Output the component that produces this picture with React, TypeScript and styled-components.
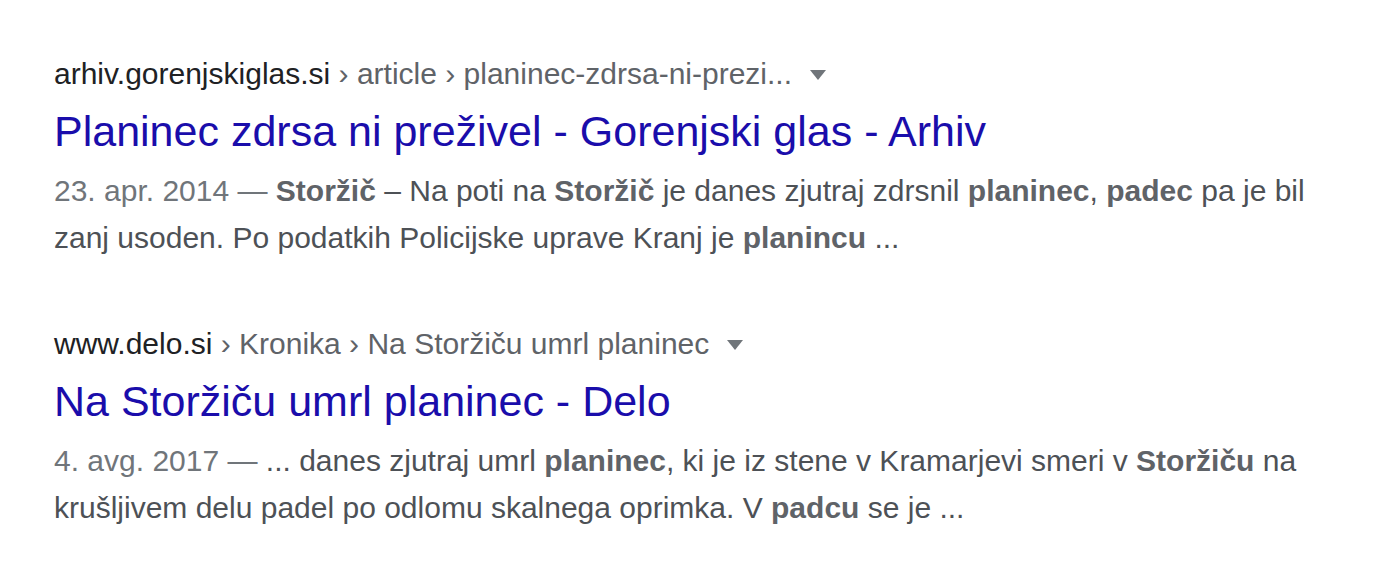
import React from "react";
import styled, { createGlobalStyle } from "styled-components";

// google results page, shown at ~2.125x zoom
const GlobalStyle = createGlobalStyle`
  html, body { margin: 0; padding: 0; background: #fff; }
  body { font-family: "Liberation Sans", Arial, sans-serif; }
`;

const Page = styled.div`
  padding: 54px 0 0 54px;
  width: 1275px;
`;

const Result = styled.div`
  margin-bottom: 63px;
`;

const Crumbs = styled.div`
  font-size: 30px;
  line-height: 39px;
  color: #5f6368;
  white-space: nowrap;
`;

const Domain = styled.span`
  color: #202124;
`;

const Arrow = styled.span`
  display: inline-block;
  vertical-align: middle;
  margin-left: 18px;
  margin-top: -2px;
  border-left: 8px solid transparent;
  border-right: 8px solid transparent;
  border-top: 10px solid #70757a;
`;

const Title = styled.h3`
  margin: 0 0 8px;
  padding-top: 11px;
  font-size: 43px;
  line-height: 55px;
  font-weight: normal;
  color: #1a0dab;
`;

const Snippet = styled.div`
  font-size: 30px;
  line-height: 47px;
  color: #4d5156;
  b {
    color: #5f6368;
    font-weight: bold;
  }
`;

const Date = styled.span`
  color: #70757a;
`;

type Item = {
  domain: string;
  path: string;
  title: string;
  date: string;
  body: React.ReactNode;
};

const items: Item[] = [
  {
    domain: "arhiv.gorenjskiglas.si",
    path: " › article › planinec-zdrsa-ni-prezi...",
    title: "Planinec zdrsa ni preživel - Gorenjski glas - Arhiv",
    date: "23. apr. 2014 — ",
    body: (
      <>
        <b>Storžič</b> – Na poti na <b>Storžič</b> je danes zjutraj zdrsnil{" "}
        <b>planinec</b>, <b>padec</b> pa je bil zanj usoden. Po podatkih
        Policijske uprave Kranj je <b>planincu</b> ...
      </>
    ),
  },
  {
    domain: "www.delo.si",
    path: " › Kronika › Na Storžiču umrl planinec",
    title: "Na Storžiču umrl planinec - Delo",
    date: "4. avg. 2017 — ",
    body: (
      <>
        ... danes zjutraj umrl <b>planinec</b>, ki je iz stene v Kramarjevi
        smeri v <b>Storžiču</b> na krušljivem delu padel po odlomu skalnega
        oprimka. V <b>padcu</b> se je ...
      </>
    ),
  },
];

export default function App() {
  return (
    <>
      <GlobalStyle />
      <Page>
        {items.map((it) => (
          <Result key={it.domain}>
            <Crumbs>
              <Domain>{it.domain}</Domain>
              {it.path}
              <Arrow />
            </Crumbs>
            <Title>{it.title}</Title>
            <Snippet>
              <Date>{it.date}</Date>
              {it.body}
            </Snippet>
          </Result>
        ))}
      </Page>
    </>
  );
}
